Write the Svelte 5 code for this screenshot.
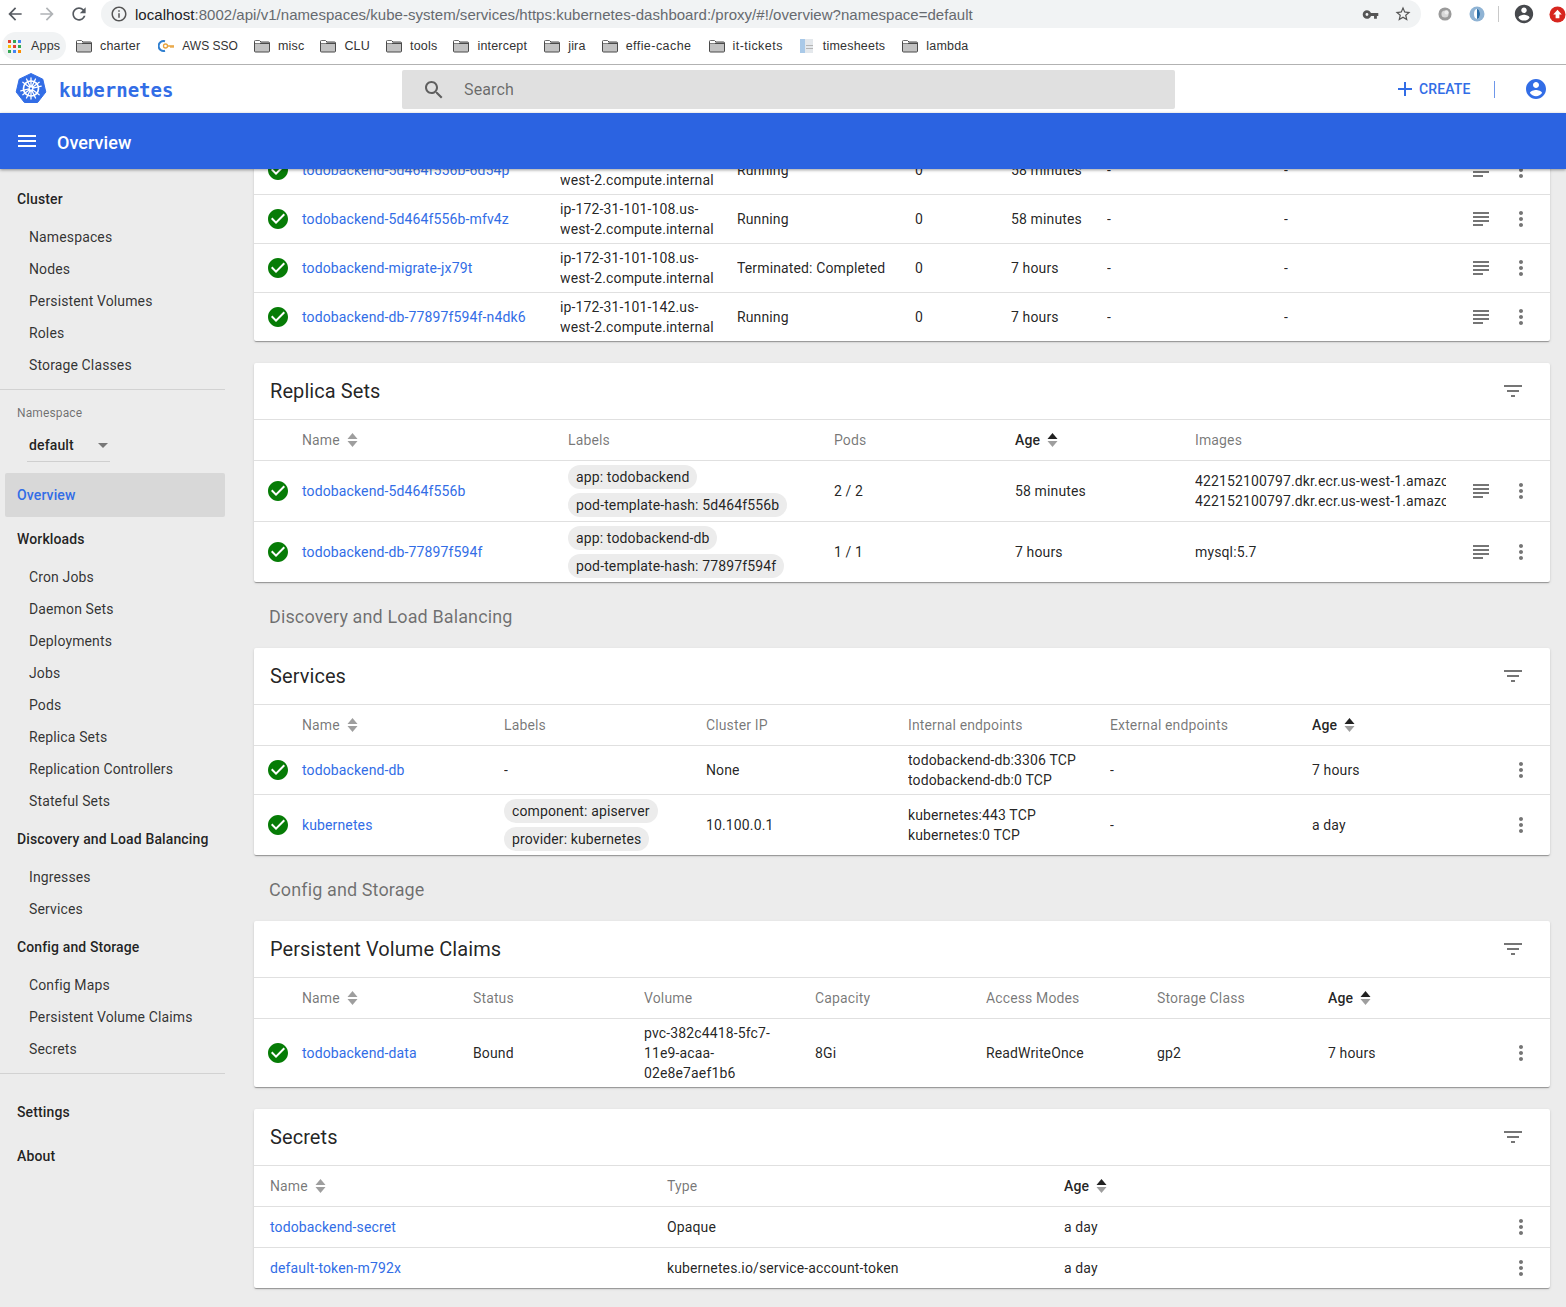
<script>
  const P = {
    check: 'M12 2C6.48 2 2 6.48 2 12s4.48 10 10 10 10-4.48 10-10S17.52 2 12 2zm-2 15l-5-5 1.41-1.41L10 14.17l7.59-7.59L19 8l-9 9z',
    filter: 'M10 18h4v-2h-4v2zM3 6v2h18V6H3zm3 7h12v-2H6v2z',
    logs: 'M14 17H4v2h10v-2zm6-8H4v2h16V9zM4 15h16v-2H4v2zM4 5v2h16V5H4z',
    more: 'M12 8c1.1 0 2-.9 2-2s-.9-2-2-2-2 .9-2 2 .9 2 2 2zm0 2c-1.1 0-2 .9-2 2s.9 2 2 2 2-.9 2-2-.9-2-2-2zm0 6c-1.1 0-2 .9-2 2s.9 2 2 2 2-.9 2-2-.9-2-2-2z',
    menu: 'M3 18h18v-2H3v2zm0-5h18v-2H3v2zm0-7v2h18V6H3z',
    search: 'M15.5 14h-.79l-.28-.27C15.41 12.59 16 11.11 16 9.5 16 5.91 13.09 3 9.5 3S3 5.91 3 9.5 5.91 16 9.5 16c1.61 0 3.09-.59 4.23-1.57l.27.28v.79l5 4.99L20.49 19l-4.99-5zm-6 0C7.01 14 5 11.99 5 9.5S7.01 5 9.5 5 14 7.01 14 9.5 11.99 14 9.5 14z',
    account: 'M12 2C6.48 2 2 6.48 2 12s4.48 10 10 10 10-4.48 10-10S17.52 2 12 2zm0 3c1.66 0 3 1.34 3 3s-1.34 3-3 3-3-1.34-3-3 1.34-3 3-3zm0 14.2c-2.5 0-4.71-1.28-6-3.22.03-1.99 4-3.08 6-3.08 1.99 0 5.97 1.09 6 3.08-1.29 1.94-3.5 3.22-6 3.22z',
    plus: 'M19 13h-6v6h-2v-6H5v-2h6V5h2v6h6v2z',
    key: 'M12.65 10C11.83 7.67 9.61 6 7 6c-3.31 0-6 2.69-6 6s2.69 6 6 6c2.61 0 4.83-1.67 5.65-4H17v4h4v-4h2v-4H12.65zM7 14c-1.1 0-2-.9-2-2s.9-2 2-2 2 .9 2 2-.9 2-2 2z',
    star: 'M22 9.24l-7.19-.62L12 2 9.19 8.63 2 9.24l5.46 4.73L5.82 21 12 17.27 18.18 21l-1.63-7.03L22 9.24zM12 15.4l-3.76 2.27 1-4.28-3.32-2.88 4.38-.38L12 6.1l1.71 4.04 4.38.38-3.32 2.88 1 4.28L12 15.4z',
    info: 'M11 7h2v2h-2zm0 4h2v6h-2zm1-9C6.48 2 2 6.48 2 12s4.48 10 10 10 10-4.48 10-10S17.52 2 12 2zm0 18c-4.41 0-8-3.59-8-8s3.59-8 8-8 8 3.59 8 8-3.59 8-8 8z',
    back: 'M20 11H7.83l5.59-5.59L12 4l-8 8 8 8 1.41-1.41L7.83 13H20v-2z',
    forward: 'M12 4l-1.41 1.41L16.17 11H4v2h12.17l-5.58 5.59L12 20l8-8z',
    refresh: 'M17.65 6.35C16.2 4.9 14.21 4 12 4c-4.42 0-7.99 3.58-7.99 8s3.57 8 7.99 8c3.73 0 6.84-2.55 7.73-6h-2.08c-.82 2.33-3.04 4-5.65 4-3.31 0-6-2.69-6-6s2.69-6 6-6c1.66 0 3.14.69 4.22 1.78L13 11h7V4l-2.35 2.35z'
  };

  const bookmarks = [
    { t: 'charter', i: 'folder' }, { t: 'AWS SSO', i: 'aws', c: 'caps' }, { t: 'misc', i: 'folder' },
    { t: 'CLU', i: 'folder' }, { t: 'tools', i: 'folder' }, { t: 'intercept', i: 'folder', c: 'pad' },
    { t: 'jira', i: 'folder' }, { t: 'effie-cache', i: 'folder', c: 'hy pad' }, { t: 'it-tickets', i: 'folder', c: 'hy' },
    { t: 'timesheets', i: 'file', c: 'pad' }, { t: 'lambda', i: 'folder' }
  ];

  const node108 = ['ip-172-31-101-108.us-', 'west-2.compute.internal'];
  const node142 = ['ip-172-31-101-142.us-', 'west-2.compute.internal'];

  const pods = [
    { name: 'todobackend-5d464f556b-6d54p', cells: [node108, 'Running', '0', '58 minutes', '-', '-'] },
    { name: 'todobackend-5d464f556b-mfv4z', cells: [node108, 'Running', '0', '58 minutes', '-', '-'] },
    { name: 'todobackend-migrate-jx79t', cells: [node108, 'Terminated: Completed', '0', '7 hours', '-', '-'] },
    { name: 'todobackend-db-77897f594f-n4dk6', cells: [node142, 'Running', '0', '7 hours', '-', '-'] }
  ];

  const img = '422152100797.dkr.ecr.us-west-1.amazonaws.com/todobackend:latest';

  const sections = [
    { title: 'Replica Sets', cls: 'replica', status: true, logs: true,
      head: [['Name', 's'], ['Labels'], ['Pods'], ['Age', 'a'], ['Images']],
      rows: [
        { name: 'todobackend-5d464f556b', cells: [{ chips: ['app: todobackend', 'pod-template-hash: 5d464f556b'] }, '2 / 2', '58 minutes', [img, img]] },
        { name: 'todobackend-db-77897f594f', cells: [{ chips: ['app: todobackend-db', 'pod-template-hash: 77897f594f'] }, '1 / 1', '7 hours', 'mysql:5.7'] }
      ] },
    { heading: 'Discovery and Load Balancing', title: 'Services', cls: 'services', status: true,
      head: [['Name', 's'], ['Labels'], ['Cluster IP'], ['Internal endpoints'], ['External endpoints'], ['Age', 'a']],
      rows: [
        { name: 'todobackend-db', cells: ['-', 'None', ['todobackend-db:3306 TCP', 'todobackend-db:0 TCP'], '-', '7 hours'] },
        { name: 'kubernetes', cells: [{ chips: ['component: apiserver', 'provider: kubernetes'] }, '10.100.0.1', ['kubernetes:443 TCP', 'kubernetes:0 TCP'], '-', 'a day'] }
      ] },
    { heading: 'Config and Storage', title: 'Persistent Volume Claims', cls: 'pvc', status: true,
      head: [['Name', 's'], ['Status'], ['Volume'], ['Capacity'], ['Access Modes'], ['Storage Class'], ['Age', 'a']],
      rows: [
        { name: 'todobackend-data', cells: ['Bound', ['pvc-382c4418-5fc7-', '11e9-acaa-', '02e8e7aef1b6'], '8Gi', 'ReadWriteOnce', 'gp2', '7 hours'] }
      ] },
    { title: 'Secrets', cls: 'secrets',
      head: [['Name', 's'], ['Type'], ['Age', 'a']],
      rows: [
        { name: 'todobackend-secret', cells: ['Opaque', 'a day'] },
        { name: 'default-token-m792x', cells: ['kubernetes.io/service-account-token', 'a day'] }
      ] }
  ];

  const nav = [
    { title: 'Cluster', items: ['Namespaces', 'Nodes', 'Persistent Volumes', 'Roles', 'Storage Classes'] }
  ];
  const nav2 = [
    { title: 'Workloads', items: ['Cron Jobs', 'Daemon Sets', 'Deployments', 'Jobs', 'Pods', 'Replica Sets', 'Replication Controllers', 'Stateful Sets'] },
    { title: 'Discovery and Load Balancing', items: ['Ingresses', 'Services'] },
    { title: 'Config and Storage', items: ['Config Maps', 'Persistent Volume Claims', 'Secrets'] }
  ];
</script>

{#snippet icon(d, cls)}
  <svg class={cls} viewBox="0 0 24 24" aria-hidden="true"><path {d} /></svg>
{/snippet}

{#snippet sort(active)}
  <svg class="sort" viewBox="0 0 10 14" aria-hidden="true">
    <polygon points="0,6 5,0 10,6" class={active ? 'on' : ''} />
    <polygon points="0,8 5,14 10,8" />
  </svg>
{/snippet}

{#snippet nameCell(name, status)}
  {#if status}
    <div class="status">{@render icon(P.check, 'ok')}</div>
  {/if}
  <a class="link" href="#top">{name}</a>
{/snippet}

{#snippet cell(c)}
  <div class="cell">
    {#if Array.isArray(c)}
      {#each c as line}<div class="line">{line}</div>{/each}
    {:else if c.chips}
      <div class="chips">
        {#each c.chips as chip}<span class="chip">{chip}</span>{/each}
      </div>
    {:else}
      {c}
    {/if}
  </div>
{/snippet}

{#snippet actions(logs)}
  <div class="actions">
    {#if logs}{@render icon(P.logs, 'act')}{/if}
    {@render icon(P.more, 'act')}
  </div>
{/snippet}

<div class="page">
  <div class="chrome">
    <div class="addr">
      <div class="navbtns">
        {@render icon(P.back, 'cb dark')}
        {@render icon(P.forward, 'cb light')}
        {@render icon(P.refresh, 'cb dark')}
      </div>
      <div class="url">
        {@render icon(P.info, 'info')}
        <span class="urltext"><b>localhost</b>:8002/api/v1/namespaces/kube-system/services/https:kubernetes-dashboard:/proxy/#!/overview?namespace=default</span>
        <span class="grow"></span>
        {@render icon(P.key, 'urlkey')}
        {@render icon(P.star, 'urlstar')}
      </div>
      <div class="exts">
        <svg class="ext" viewBox="0 0 16 16"><circle cx="8" cy="8" r="5.800" fill="#d8d8d8" stroke="#9a9a9a" stroke-width="3.400" /><circle cx="9.800" cy="6.200" r="2.400" fill="#ededed" /></svg>
        <svg class="ext ext2" viewBox="0 0 16 16"><circle cx="8" cy="8" r="7.500" fill="#8fb3d4" /><ellipse cx="8" cy="8" rx="3" ry="5" fill="#fff" /><path d="M8 3a3 5 0 0 1 0 10z" fill="#2a6ea8" /></svg>
        <span class="csep"></span>
        {@render icon(P.account, 'cacc')}
        <svg class="upd" viewBox="0 0 18 18"><circle cx="9" cy="9" r="8.500" fill="#d7261f" /><path d="M9 4l4.500 5H11v4H7V9H4.500z" fill="#fff" /></svg>
      </div>
    </div>
    <div class="marks">
      <div class="apps">
        <svg class="grid9" viewBox="0 0 13 13">
          {#each ['#e34133', '#34a853', '#4285f4', '#fbbc05', '#e34133', '#34a853', '#34a853', '#4285f4', '#fb8c00'] as c, i}
            <rect x={(i % 3) * 5} y={Math.floor(i / 3) * 5} width="3" height="3" fill={c} />
          {/each}
        </svg>
        <span>Apps</span>
      </div>
      {#each bookmarks as b}
        <div class="mark {b.c ?? ''}">
          {#if b.i === 'folder'}
            <svg class="bi" viewBox="0 0 16 14"><path d="M.5 2.500A1 1 0 0 1 1.500 1.500h4l1.500 1.500h7.500a1 1 0 0 1 1 1v8a1 1 0 0 1-1 1h-13a1 1 0 0 1-1-1z" fill="#c2c2c2" stroke="#4a4a4a" /><path d="M1 4.500h14" stroke="#4a4a4a" /><rect x="1" y="1.800" width="5" height="2.500" fill="#fff" /></svg>
          {:else if b.i === 'aws'}
            <svg class="bi" viewBox="0 0 16 14"><path d="M7 2.200A5 5 0 1 0 7 11.800" fill="none" stroke="#2f7fd0" stroke-width="2" /><circle cx="7.500" cy="7" r="2" fill="none" stroke="#e8a33d" stroke-width="1.300" /><path d="M9.500 7H16M13 7v2M15 7v2" stroke="#e8a33d" stroke-width="1.300" /></svg>
          {:else}
            <svg class="bi" viewBox="0 0 16 14"><rect x="1" y="0" width="13" height="14" fill="#e4e8ec" /><rect x="1" y="0" width="5" height="14" fill="#a9c9e8" /><rect x="7" y="6" width="7" height="1" fill="#b5b5b5" /><rect x="7" y="9" width="7" height="1" fill="#b5b5b5" /></svg>
          {/if}
          <span>{b.t}</span>
        </div>
      {/each}
    </div>
  </div>

  <header class="header">
    <div class="brand">
      <svg class="logo" viewBox="0 0 32 32" aria-hidden="true">
        <polygon points="16,0.500 27.800,6.200 30.800,19 22.600,29.500 9.400,29.500 1.200,19 4.200,6.200" fill="#326de6" stroke="#326de6" stroke-width="1" stroke-linejoin="round" />
        <g stroke="#fff" fill="none">
          <circle cx="16" cy="15.500" r="7.500" stroke-width="1.700" />
          <circle cx="16" cy="15.500" r="1.800" stroke-width="1.200" />
          <path stroke-width="1.300" stroke-linecap="round" d="M16 5v8.500M16 17.500V26M7.800 9.300l6.600 5M17.600 16.700l6.600 5M5.800 17.800l8.200-1.900M18 15.100l8.200-1.900M11.500 25l3.700-7.700M16.800 13.700l3.700-7.700M11.500 6l3.700 7.700M16.800 17.300l3.700 7.700M24.200 9.300l-6.600 5M14.400 16.700l-6.600 5" />
        </g>
      </svg>
      <span class="wordmark">kubernetes</span>
    </div>
    <div class="search">
      {@render icon(P.search, 'sicon')}
      <span>Search</span>
    </div>
    <div class="hright">
      <div class="create">{@render icon(P.plus, 'plus')}<span>CREATE</span></div>
      <span class="hsep"></span>
      {@render icon(P.account, 'hacc')}
    </div>
  </header>

  <div class="toolbar">
    {@render icon(P.menu, 'menu')}
    <h1>Overview</h1>
  </div>

  <div class="body">
    <nav class="side">
      {#each nav as g}
        <div class="gtitle">{g.title}</div>
        {#each g.items as it}<div class="gitem">{it}</div>{/each}
      {/each}
      <div class="divider"></div>
      <div class="nslabel">Namespace</div>
      <div class="nsselect"><span>default</span><i class="caret"></i></div>
      <div class="gtitle current">Overview</div>
      {#each nav2 as g}
        <div class="gtitle">{g.title}</div>
        {#each g.items as it}<div class="gitem">{it}</div>{/each}
      {/each}
      <div class="divider last"></div>
      <div class="gtitle">Settings</div>
      <div class="gtitle">About</div>
    </nav>

    <main class="main">
      <div class="stack">
        <section class="card podcard">
          {#each pods as r}
            <div class="row pods">
              {@render nameCell(r.name, true)}
              {#each r.cells as c}{@render cell(c)}{/each}
              {@render actions(true)}
            </div>
          {/each}
        </section>

        {#each sections as s}
          {#if s.heading}<h2 class="heading">{s.heading}</h2>{/if}
          <section class="card">
            <div class="ctitle">
              <span>{s.title}</span>
              {@render icon(P.filter, 'filter')}
            </div>
            <div class="row head {s.cls}">
              {#if s.status}<div class="status"></div>{/if}
              {#each s.head as h}
                <div class="th" class:age={h[1] === 'a'}>
                  <span>{h[0]}</span>
                  {#if h[1]}{@render sort(h[1] === 'a')}{/if}
                </div>
              {/each}
            </div>
            {#each s.rows as r}
              <div class="row {s.cls}">
                {@render nameCell(r.name, s.status)}
                {#each r.cells as c}{@render cell(c)}{/each}
                {@render actions(s.logs)}
              </div>
            {/each}
          </section>
        {/each}
      </div>
    </main>
  </div>
</div>

<style>
  :global(body) { margin: 0; background: #ececec; }
  .page {
    height: 1307px; overflow: hidden; display: flex; flex-direction: column;
    font-family: Roboto, "Noto Sans", sans-serif; font-size: 14px; letter-spacing: .13px; color: rgba(0,0,0,.87);
    background: #ececec;
  }
  svg { display: block; flex: none; fill: currentColor; }

  /* browser chrome */
  .chrome { background: #fff; height: 64px; border-bottom: 1px solid #b2b2b2; font-family: "Liberation Sans", Arial, sans-serif; letter-spacing: 0; flex: none; }
  .addr { height: 28px; display: flex; align-items: center; }
  .navbtns { width: 101px; display: flex; align-items: center; padding-left: 3px; gap: 8px; box-sizing: border-box; }
  .cb { width: 24px; height: 24px; transform: scale(.83); }
  .dark { color: #555a60; }
  .light { color: #b0b3b6; }
  .url { width: 1320px; height: 28px; background: #f1f3f4; border-radius: 14px; display: flex; align-items: center; padding-left: 9px; box-sizing: border-box; color: #5f6368; }
  .info { width: 18px; height: 18px; margin-right: 7px; color: #555; }
  .urltext { font-size: 15px; letter-spacing: .03px; white-space: nowrap; color: #666a6f; }
  .urltext b { font-weight: 400; color: #202124; }
  .grow { flex: 1; }
  .urlkey { width: 17px; height: 17px; color: #555; margin-right: 15px; }
  .urlstar { width: 18px; height: 18px; color: #555; margin-right: 9px; }
  .exts { display: flex; align-items: center; flex: 1; padding-left: 17px; }
  .ext { width: 14px; height: 14px; }
  .ext2 { width: 16px; height: 16px; margin-left: 17px; }
  .csep { width: 1px; height: 16px; background: #c9c9c9; margin-left: 13px; }
  .cacc { width: 22px; height: 22px; color: #47494d; margin-left: 14px; }
  .upd { width: 17px; height: 17px; margin-left: 14px; }

  .marks { height: 36px; display: flex; align-items: center; font-size: 12.500px; letter-spacing: .2px; color: #333; padding-left: 2px; }
  .apps { width: 64px; height: 28px; background: #f1f3f4; border-radius: 14px; display: flex; align-items: center; box-sizing: border-box; padding-left: 6px; margin-right: 10px; }
  .grid9 { width: 13px; height: 13px; margin-right: 10px; }
  .mark { display: flex; align-items: center; gap: 8px; margin-right: 16px; }
  .pad { margin-right: 17px; }
  .caps { margin-left: 2px; }
  .caps span { font-size: 12px; letter-spacing: 0; }
  .hy span { letter-spacing: .45px; }
  .bi { width: 16px; height: 14px; fill: none; }

  /* app header */
  .header { height: 48px; background: #fff; display: flex; align-items: center; flex: none; }
  .brand { width: 402px; display: flex; align-items: center; padding-left: 15px; box-sizing: border-box; }
  .logo { width: 32px; height: 32px; margin-right: 12px; }
  .wordmark { font-family: "DejaVu Sans Mono", monospace; font-weight: 700; font-size: 19px; letter-spacing: 0; color: #326de6; padding-top: 2px; }
  .search { width: 773px; height: 39px; background: #e0e0e0; border-radius: 2px; display: flex; align-items: center; color: rgba(0,0,0,.54); font-size: 16px; padding-left: 20px; box-sizing: border-box; margin-top: 1px; }
  .sicon { width: 24px; height: 24px; margin-right: 18px; color: #5f5f5f; }
  .hright { flex: 1; display: flex; align-items: center; padding-left: 218px; }
  .create { display: flex; align-items: center; color: #326de6; font-weight: 500; font-size: 14px; }
  .plus { width: 24px; height: 24px; margin-right: 2px; }
  .hsep { width: 1px; height: 17px; background: #6e97ea; margin-left: 23px; }
  .hacc { width: 24px; height: 24px; color: #326de6; margin-left: 29px; }

  .toolbar { height: 56px; background: #2b63e1; color: #fff; display: flex; align-items: center; flex: none; position: relative; z-index: 2; box-shadow: 0 1px 3px rgba(0,0,0,.4); padding-left: 15px; }
  .menu { width: 24px; height: 24px; margin-right: 18px; }
  h1 { margin: 0; padding-top: 2px; font-size: 18px; font-weight: 500; letter-spacing: .05px; }

  /* layout */
  .body { flex: 1; display: flex; min-height: 0; }
  .side { width: 225px; flex: none; padding-top: 8px; box-sizing: content-box; font-size: 14px; }
  .gtitle { height: 44px; line-height: 44px; padding-left: 17px; font-weight: 500; white-space: nowrap; }
  .gitem { height: 32px; line-height: 32px; padding-left: 29px; color: rgba(0,0,0,.8); }
  .divider { height: 1px; background: #d2d2d2; margin-top: 8px; }
  .divider.last { margin-bottom: 16px; }
  .nslabel { font-size: 12px; color: rgba(0,0,0,.54); line-height: 14px; padding: 16px 0 0 17px; }
  .nsselect { margin: 9px 0 11px 27px; width: 83px; height: 33px; border-bottom: 1px solid #cfcfcf; display: flex; align-items: center; box-sizing: border-box; padding-left: 2px; font-weight: 500; position: relative; }
  .caret { width: 0; height: 0; border: 5px solid transparent; border-top-color: #777; border-bottom-width: 0; margin-left: auto; margin-right: 2px; }
  .current { margin-left: 5px; padding-left: 12px; background: #d8d8d8; color: #326de6; border-radius: 2px; }

  .main { flex: 1; min-width: 0; overflow: hidden; padding: 0 16px 0 29px; }
  .stack { margin-top: -23px; }
  .card { background: #fff; border-radius: 2px; box-shadow: 0 2px 1px -1px rgba(0,0,0,.2), 0 1px 1px 0 rgba(0,0,0,.14), 0 1px 3px 0 rgba(0,0,0,.12); margin-bottom: 22px; }
  .heading { margin: -22px 0 0; height: 66px; line-height: 70px; font-size: 18px; font-weight: 400; color: rgba(0,0,0,.54); padding-left: 15px; letter-spacing: .12px; }
  .ctitle { height: 56px; display: flex; align-items: center; justify-content: space-between; padding: 0 25px 0 16px; font-size: 20px; letter-spacing: .08px; }
  .filter { width: 24px; height: 24px; color: #757575; }

  .row { display: grid; align-items: center; min-height: 40px; border-top: 1px solid #e0e0e0; }
  .podcard .row:first-child { border-top: 0; }
  .head { color: rgba(0,0,0,.54); }
  .status { padding-left: 14px; }
  .ok { width: 24px; height: 24px; margin-left: -2px; color: #067c06; }
  .link { color: #326de6; text-decoration: none; white-space: nowrap; }
  .cell { padding: 4px 0; line-height: 20px; min-width: 0; overflow: hidden; white-space: nowrap; }
  .line { overflow: hidden; }
  .chips { display: flex; flex-direction: column; align-items: flex-start; gap: 4px; }
  .chip { background: #ececec; border-radius: 12px; height: 24px; line-height: 24px; padding: 0 8px; }
  .th { display: flex; align-items: center; gap: 7px; }
  .age { color: rgba(0,0,0,.87); font-weight: 500; }
  .sort { width: 11px; height: 14px; fill: #9e9e9e; }
  .sort .on { fill: #212121; }
  .actions { display: flex; justify-content: flex-end; padding-right: 17px; grid-column: -2 / -1; grid-row: 1; color: #757575; gap: 16px; }
  .act { width: 24px; height: 24px; }

  .pods { grid-template-columns: 48px 258px 177px 178px 96px 96px 177px 100px 1fr; }
  .replica { grid-template-columns: 48px 266px 266px 181px 180px 251px 1fr; }
  .services { grid-template-columns: 48px 202px 202px 202px 202px 202px 100px 1fr; }
  .pvc { grid-template-columns: 48px 171px 171px 171px 171px 171px 171px 100px 1fr; }
  .secrets { grid-template-columns: 16px 397px 397px 397px 1fr; }
  .secrets .link:first-child, .secrets > .th:first-child { grid-column: 2; }
</style>
